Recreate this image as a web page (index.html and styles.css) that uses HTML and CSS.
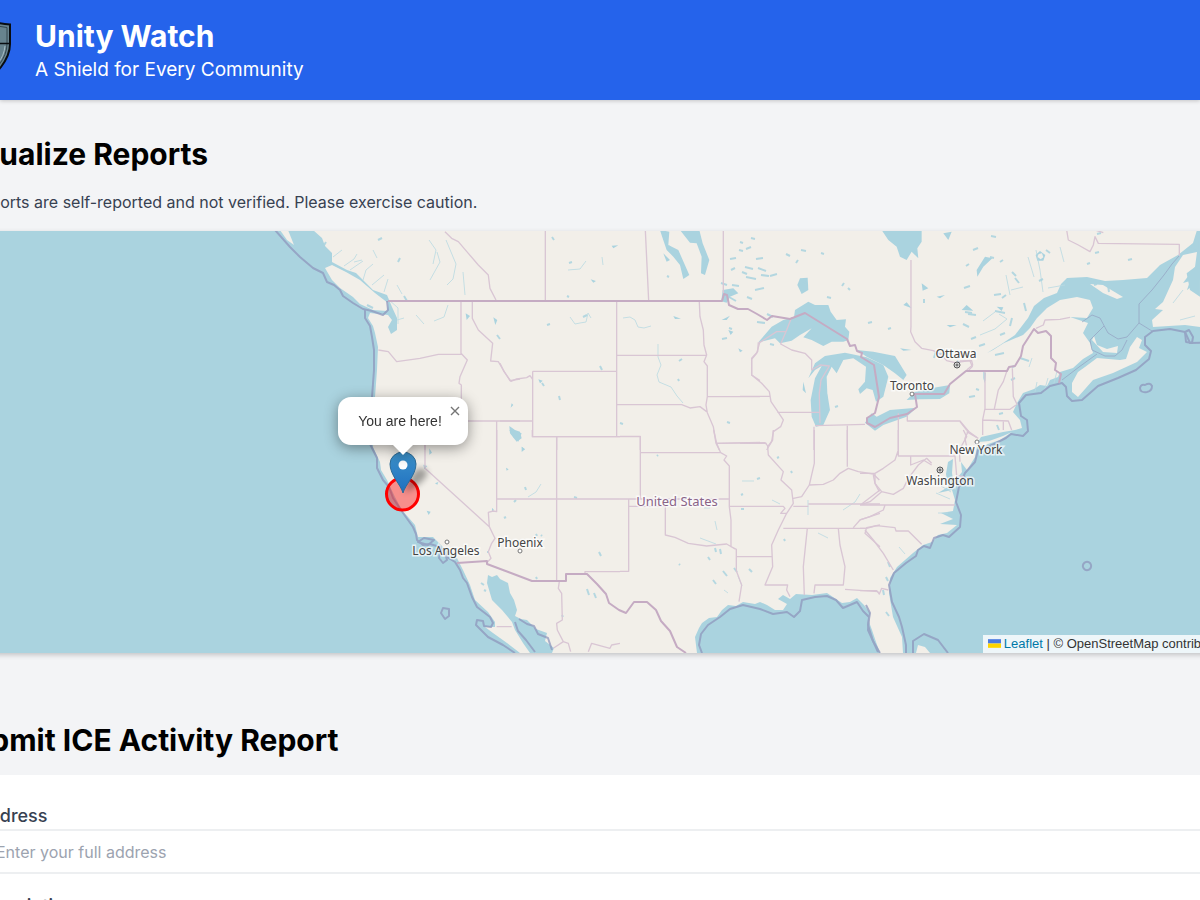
FILE: index.html
```html
<!DOCTYPE html>
<html lang="en">
<head>
<meta charset="utf-8">
<meta name="viewport" content="width=device-width, initial-scale=1">
<title>Unity Watch</title>
<link rel="stylesheet" href="styles.css">
</head>
<body>
<header class="site-header">
  <div class="brand">
    <svg class="logo" viewBox="0 0 59 68" aria-hidden="true">
      <path d="M29 2Q40 7 58 8.500V28Q58 39 49 51Q42 60 29 66Q16 60 9 51Q0 39 0 28V8.500Q18 7 29 2Z" fill="#67838e" stroke="#090d11" stroke-width="2"/>
      <path d="M29 6Q40 10 55 11.500V28Q55 38 47 49Q40 57 29 62Q18 57 11 49Q3 38 3 28V11.500Q18 10 29 6Z" fill="none" stroke="#34464e" stroke-width="1"/>
      <path d="M0 27.500H58M29 2V66" fill="none" stroke="#090d11" stroke-width="1.400"/>
      <path d="M53 30Q52 40 46 47" fill="none" stroke="#a9bec6" stroke-width="1"/>
    </svg>
    <div>
      <h1 class="brand-name">Unity Watch</h1>
      <p class="brand-tagline">A Shield for Every Community</p>
    </div>
  </div>
</header>

<main class="content">
  <section class="reports">
    <h2 class="section-title">Visualize Reports</h2>
    <p class="notice">All reports are self-reported and not verified. Please exercise caution.</p>
    <div class="map">
      <svg class="map-canvas" viewBox="-48 231 1283 422" preserveAspectRatio="xMinYMin slice" role="img" aria-label="Map of the United States">
        <defs>
          <linearGradient id="pin" x1="0" y1="0" x2="0" y2="1"><stop offset="0" stop-color="#3d93cb"/><stop offset="1" stop-color="#1f6fc0"/></linearGradient>
          <filter id="soft" x="-50%" y="-50%" width="200%" height="200%"><feGaussianBlur stdDeviation="3"/></filter>
        </defs>
        <rect class="land" x="-64" y="230" width="1400" height="424"/>
        <g class="water">
          <path d="M-64 230H313L322 238L325 246L332 253L332 262L347 270L356 273L363 280L373 290L387 295L392 307L397 318L397 330L391 334L388 327L392 320L388 315L370 313L368 318L373 326L375 333L378 347L377 370L375 397L373 447L380 462L381 470L387 480L395 497L402 510L415 525L418 537L433 537L443 547L457 558L463 570L470 585L475 600L488 612L495 622L495 627L485 627L493 633L507 643L520 653H-64Z"/>
          <path d="M488 575L492 577L497 575L500 579L508 583L510 593L514 600L517 610L515 616L521 619L527 620L536 629L547 633L545 641L554 648L552 653H530L523 643L515 630L512 622L502 610L492 600L487 583Z"/>
          <path d="M697 653L695 637L699 628L702 623L709 618L717 617L722 610L728 605L736 606L743 602L755 604L760 602L767 605L775 610L783 610L787 604L778 599L783 595L790 599L796 594L812 595L827 593L842 603L850 602L857 598L864 605L870 613L869 622L872 630L876 642L880 653Z"/>
          <path d="M903 653L902 637L893 617L889 593L890 578L897 567L913 553L923 545L932 542L938 535L947 533L957 525L940 524L953 519L941 513L953 511L955 500L952 490L938 493L948 487L946 474L948 462L953 459L952 473L955 490L958 477L962 472L961 462L967 470L975 457L977 447L990 441L978 442L981 437L1003 432L1015 430L1022 428L1020 420L1013 412L1017 403L1023 393L1034 389L1040 385L1047 386L1050 380L1058 377L1060 372L1073 368L1083 359L1093 353L1090 343L1083 333L1088 323L1070 317L1087 318L1093 308L1090 300L1077 297L1060 300L1047 308L1037 318L1030 328L1023 335L1004 343L993 350L987 353L1000 345L1015 335L1028 318L1034 306L1044 298L1057 293L1061 284L1067 278L1087 277L1105 281L1123 280L1147 278L1160 265L1178 255L1193 243L1197 230H1340V653Z"/>
          <path d="M907 653L914 638L928 640L937 653Z"/>
        </g>
        <g class="land">
          <path d="M325 268L332 265L346 272L360 280L375 293L388 303L387 311L373 310L360 304L353 297L340 288L332 280Z"/>
          <path d="M280 230L288 230L294 245L287 240Z"/>
          <path d="M1072 383L1078 372L1085 367L1097 358L1120 360L1126 359L1130 347L1137 337L1142 340L1139 348L1147 352L1137 362L1113 373L1093 380L1078 397L1072 392Z"/>
          <path d="M1092 340L1094 336L1097 345L1107 349L1118 346L1117 353L1103 352Z"/>
          <path d="M1090 284L1103 285L1123 297L1117 299L1103 293Z"/>
          <path d="M1183 255L1197 252L1195 267L1183 283L1190 281L1187 290L1200 280L1240 270V327L1200 327L1185 325L1153 327L1152 320L1163 310L1155 309L1163 302L1173 280L1175 267Z"/>
          <path d="M978 445L1003 436L1012 432L1000 440L982 446Z"/>
          <path d="M916 653L918 645L925 647L930 653Z"/>
        </g>
        <g class="water" transform="translate(740 230) scale(.3333)">
          <path d="M55 337L95 290L130 270L162 262L165 240L205 215L225 225L265 225L272 245L290 270L318 268L315 290L328 305L325 330L310 335L275 335L250 348L215 330L190 322L215 295L180 315L155 332L120 340L105 325Z"/>
          <path d="M205 445L225 400L255 378L315 368L380 382L430 405L445 440L430 500L408 515L398 480L380 475L360 492L355 478L375 455L378 410L340 385L310 390L290 430L275 410L260 440L262 490L270 540L250 585L228 590L215 560L212 510L225 445L245 408L225 420Z"/>
          <path d="M350 360L400 365L465 378L500 435L490 450L465 430L430 405L380 380Z"/>
          <path d="M500 510L525 485L590 472L630 465L628 490L600 507L540 508Z"/>
          <path d="M375 578L395 550L410 560L450 540L530 533L500 560L430 585L405 602Z"/>
          <path d="M425 0L445 30L470 50L480 80L500 90L515 65L535 85L532 55L545 35L545 0Z"/>
          <path d="M172 165L180 145L203 143L205 180L185 192Z"/>
          <path d="M500 217L515 235L490 225ZM480 355L515 360L490 362ZM545 160L565 175L548 182ZM610 10L635 5L625 30ZM190 455L198 490L188 480ZM665 240L680 225L700 242ZM620 285L650 285L630 292ZM590 200L615 195L600 205Z"/>
        </g>
        <g class="water" transform="translate(500 230) scale(.3333)">
          <path d="M540 0H598L608 40L628 90L615 135L603 130L605 80L590 40L570 38ZM480 0L508 5L505 45L535 60L568 135L550 147L540 105L520 80L500 60L488 25ZM490 70L510 90L500 95Z"/>
          <path d="M668 180L700 175L715 190L690 200L680 218L664 214ZM665 270L690 257L680 270ZM685 300L700 305L692 315ZM715 355L728 362L720 367ZM272 148L288 153L280 158ZM335 47L355 46L340 55ZM520 258L543 266L525 267ZM28 588L45 600L60 605L65 625L50 635L30 610ZM115 448L128 452L120 460ZM65 650L75 658L68 660Z"/>
        </g>
        <g class="water" transform="translate(260 230) scale(.3333)">
          <path d="M700 262L712 270L706 285ZM617 250L630 258L620 270ZM755 520L760 525L752 533Z"/>
        </g>
        <g class="water" transform="translate(960 230) scale(.3333)">
          <path d="M75 80L97 85L70 110L52 140L50 120ZM110 230L130 232L125 243ZM70 425L78 430L74 460L70 445ZM680 130L720 100V200L690 180ZM690 50L715 30L715 65Z"/>
          <path d="M240 63L256 75L250 92L232 92L227 75ZM236 72L232 80L242 88L250 82L246 70Z" fill-rule="evenodd"/>
        </g>
        <g class="water" transform="translate(360 430) scale(.3333)">
          <path d="M208 55L216 68L208 74ZM190 104L202 108L193 118ZM225 160L235 156L232 164ZM200 242L212 245L206 255ZM448 0L485 10L475 35L460 22ZM485 50L495 58L485 66ZM438 113L446 118L440 122ZM396 233L402 240L396 246Z"/>
        </g>

        <g class="streams">
          <path d="M570 317l5 7 5-1 6-1 2-9 3 5M623 318l7-1 5 3 3 7 6 1 7-2M658 344v13l3 8-4 10 2 7 12 5 6 9 6 7M568 270l12-1 6-8M602 257l1 8M429 240l7 10-3 14M446 240l10 24-3 15-6 6M463 272l2 23M437 252l3 10-10 18M416 315l8 9M434 321l10-4 4-12M528 497l8-5 5-8"/>
          <path d="M333 257l9-7M344 266l10-7 3-5M350 270l13-9M363 280l3-10 7-6M372 285l12-10M384 292l4-13M397 320l7-2M402 294l-5-9M354 262l8-2M373 250l4 8M388 299l10 9 0 16"/>
          <path d="M980 335l15-6 12-10-8-5M1036 250l4 20 3 22M1028 257l6 20M1006 275l4 20M1011 290l12-3M1060 247l4 15M983 321l12-9M985 373v8M1029 367l3-9M1044 392l4-14M1054 383l3-12M1035 392l2-10M1065 285l-17 3M1173 303l10-13M1180 320l15-4"/>
          <path d="M948 513h-10M950 499l-14-6M951 492l-10-6M899 547l6 7M704 508h6M715 521l2 9M742 481h12M724 590l4 3M738 576l4 10M700 538l16 6M808 500v15M843 510l12-8 5-8M780 504l-8-4M818 533l10 5"/>
        </g>
        <g class="specks">
          <path d="M740 242l3 1m8-5l4 1m-9 10l5-2m5 12l7-1m-18 9l8 2m5-1l8 3m-20 6l10 2m5-4l8 1m-14 14l9-2m-17 9l5 2m18-23l7-2m9-20l4 2m6 7l2-3m4 24l4-2m-5-32l5 1m15 2l3 1m24 34l2 2m-23 7l4 1m11-12l2-3m-87 39l8 1m2-9l6 3m2 17l5-2m-10 12l4 1m52 49l1 6m8 7l3-1m30-83l4-1m16 7l3-1m33-29l0 4m12 48l-2 7m6-4l5-1m12 8l3 2m8-49l8 1m-5 24l5-2m3 9l6-2m9-49l7-1m-6 17l10 2m7 5l-2 8m-15 29l9-2m8 14l3-1m-39 23l3 1m-10 7l6-1m36-16l4-2m5-20l9 3m-30 53l4-1m-6 12l2 5"/>
          <path d="M730 259l6-1m-5 12l4-2m-14 15l6 2m-4 10l6-1m3-9l7 1m-10 11l7 4m6-29l5 2m-8-24l4 1m-14 77l3 1m-10 10l5-1m-58-92l2 4m5 5l3-2m-12 23l2 1m-102 19l2 1m-17-60l2 3m15 23l3-1m-52-46l3 1m60 100l4-2m-90 20l3 4m100 27l2 4m-60 13l2 3m15 10l1 4m60 23l3 1m104-2l3 1m-51-62l3-2m-4 20l1 2m-132-56l3-1"/>
          <path d="M715 548l1 4m-8 5l2 3m10-11l1 5m2 17l4 5m-14 4l3 4m18-16l3 4m12-3l3 3m-73-8l1 1m77-86l3-1m17-20l2-1m12 14l1 2m-51 22l2-1m-2 15l3 0m40 30l1 2m-128-85l1-1m-84 42l3 1m-41 36l1 2m-1 41l1 2m4-44l1 1m-55 16l2 0m15-34l2-1m19-30l1 3m-12 12l2-2m-35 83l3 2m0 5l2 1m76 24l1 2m24-28l2 6m5-2l2 5m3-46l2 4M888 562l2 5m-4 10l2 4m-5 9l1 5m2 17l3 4"/>
          <path d="M973 250l5-2m13-12l5 1m4 25l3-2m9 12l4 4m-52 12l6-2m-4-20l3-2m-6 60l6 3m-4-15l7 1m28 22l5-2m-3-35l4-3m9-17l4 5m5 20l2 8m13-30l4-2m3-29l4 3m-60 4l4 1m100 27l3-1m11 1l1 7m-22-28l3-1m5-10l4-1m29 8l4-1m-35-25l4-1M367 305l6 3M378 240l4-2M398 262l2-4m4 38l3 5M323 247l3-5M328 262l-3 4"/>
        </g>

        <g class="maritime">
          <path d="M275 230L290 247L300 257L313 268L323 273L327 282L334 285L340 290L343 296L353 303L363 309L372 311L383 315L388 310L387 301"/>
          <path d="M365 310V318L370 326L372 337L374 350V370L372 397L368 440L377 458V468L383 480L389 487L393 498L403 513L413 527L416 534L417 540L423 545L430 544L440 547L447 557L455 562L460 570L463 578L467 583L472 597L477 607L490 617L493 623L491 627L484 626L483 621L477 620L476 625L488 637L503 645L515 653"/>
          <path d="M441 550L439 558L443 563L447 560L445 553ZM443 608L449 609L449 616L445 619L441 613ZM418 542L424 538L434 540L428 545ZM515 622L518 631L526 640L535 652M519 619L527 624L534 626L538 634L548 638L552 650"/>
          <path d="M702 653L699 645L701 634L708 625L720 617L730 609L743 605L760 609L773 614L787 612L794 617L800 611L802 600L815 597L827 596L836 600L843 608L857 602L863 611L869 617L868 630L878 652"/>
          <path d="M866 605L870 613L868 625L873 641L880 653M906 653V645L902 627L899 617L892 602L889 585L894 573L906 563L916 556L918 550L924 546L930 548L934 538L943 535L949 537L960 527L961 515L956 502L959 487L965 473L975 462L978 450L990 446L1006 438L1011 434L1023 436L1028 431L1027 420L1021 416L1019 403L1026 395L1041 393L1050 386L1062 383L1066 387L1067 396L1072 401L1082 400L1098 386L1118 378L1136 370L1149 359L1151 351L1145 345V337L1153 331L1170 329L1185 332L1190 343L1240 342"/>
          <path d="M1185 332L1189 330L1193 337L1192 343L1186 342ZM1140 388Q1141 384 1145 385Q1150 382 1152 386Q1152 391 1147 392Q1140 393 1140 388ZM1083 567a4 4 0 1 0 8-2a4 4 0 1 0-8 2M913 653L913 641L924 634L938 640L948 653"/>
        </g>
        <g class="maritime faint"><path d="M1179 256L1172 264L1164 275L1152 290L1139 304V323L1127 337L1118 339L1108 333L1100 318L1092 315L1082 322M1139 323L1152 331M1127 340L1122 350L1115 356H1105L1092 350L1090 340L1104 326M1062 380L1079 367L1097 354"/></g>

        <g class="state">
          <path transform="translate(260 230) scale(.3333)" d="M555 5L575 25L595 35L625 70L655 105L685 135L690 175L708 210M603 213V370L622 390L600 440L597 460L604 465L604 573M637 213V265L655 300L698 340L692 393L715 395L730 420L750 452L780 447M355 360L385 365L410 395L480 385L535 373H605M495 580V660M604 573H780M710 573V660"/>
          <path transform="translate(500 230) scale(.3333)" d="M136 0V211M436 0L446 211M670 0V190M350 215V620M598 215L600 260L610 300L612 345L620 375L612 395L622 408V500L618 525L622 548L640 590L648 640L658 660M350 376H618M98 424H350M98 424V620H421V660M350 524H545L570 534L600 530L620 545M622 500H780M650 640L780 637M0 400L12 425L33 454L50 447L80 443L90 437L98 448M170 620V660M0 573H98M780 335L770 370L755 388L755 435L780 452"/>
          <path transform="translate(740 230) scale(.3333)" d="M513 90V290L512 305L525 335L545 355L580 362L605 375L620 392L645 398L690 392L697 410L685 422M155 262L140 300L122 342L155 360L195 370L215 390L215 420L240 405L268 408L243 450L238 490L240 580M60 337L110 305L138 304M55 337L53 365L35 385L35 435L65 460L88 485L93 515L110 540L130 570L122 590L100 605L95 635L80 660M0 499H90M112 547H240M222 590V660M225 587L375 583M322 587V660M475 550V660M502 555V573H660L685 603L675 625L680 650M0 640H80"/>
          <path transform="translate(360 430) scale(.3333)" d="M195 45V115L388 290L400 315L405 325L395 340L385 365L393 385L382 397M410 0V245L400 243L385 247L388 290M410 207H780M590 20V450M517 0V20H780M675 433V425H780M598 455L595 475L605 490L607 570L590 580L592 600L610 635L625 640L632 665M610 635L580 655M685 665L695 640L750 655L755 645L780 640M410 590H455"/>
          <path transform="translate(620 430) scale(.3333)" d="M0 19H61V207M61 68H300M0 207H327M281 0L290 40L302 68L320 78L312 90L328 108V230L333 270L333 350L349 358V422L365 465L357 515M290 40L435 38L445 50M460 0L458 30L443 50L445 75L490 125L483 150L515 180L520 220L500 250L475 300L455 345L458 410L435 465H503L500 480L510 500M330 229H490L495 235L482 250H500M520 229H565M565 222H780M26 207V424H0M26 229H136V315L165 322L205 340L260 348L320 342L345 357M490 295H740M350 380H455M562 295L550 410L553 495M655 295L660 345L675 410L670 465H585L582 490M675 478L775 485M583 0V100L568 165L610 163L640 150L660 130L685 115L715 125L760 132L778 150M682 0V110M520 205L545 200L568 165M725 222L780 180M760 135L765 160L778 185M700 293L720 270L780 250M780 285L740 293L735 310L780 350"/>
          <path transform="translate(860 430) scale(.3333)" d="M115 0V78H285L290 137L312 140M115 60L105 90L70 115L45 130L0 130M45 130L45 160L65 185L30 215L0 225M65 185L100 193L130 175L145 145L175 105L200 85L215 100M152 80V105L190 90L215 105M0 225H285M75 225L70 240L30 260L0 270M0 295H20L50 287L105 293L108 303H145L185 343M15 300L40 330L70 370L100 420M0 482H50L58 492L65 475L85 480M300 95L298 60L320 20L310 0M320 5L355 25"/>
          <path transform="translate(960 230) scale(.3333)" d="M320 0L325 30L355 45L390 65L400 45L405 20L415 40L658 43V77M405 0L430 8M228 295L250 285L255 270L300 268L330 262M75 425V535L68 570V615M75 538L150 538L168 525M140 425L130 455L115 480L103 537M157 415L160 500L172 525M68 570L145 573L155 600M130 573V600M0 575L20 600L50 622M0 393L35 392L38 405L20 420"/>
        </g>
        <g class="country">
          <path d="M388 301H722L724 294L727 295L729 305L738 309L748 309L757 314L767 320L772 316L790 319L805 313L847 339L850 346L855 345L857 351L862 353L861 357L874 365L879 397L875 413L867 418L867 423L875 427L890 418L907 414L917 407L915 394L944 394L950 384L966 371L1007 371L1009 367L1015 366L1021 356L1023 346L1034 329L1038 333L1046 331L1051 336V358L1056 363L1055 370L1061 374L1059 383"/>
          <path d="M457 563L487 561V564L532 581H566V574H587L597 584L606 594L609 603L619 610L626 613L634 602L647 602L656 610L661 621L670 631L677 647L686 653"/>
        </g>

        <g class="places">
          <g class="dot"><circle cx="447" cy="542" r="2"/><circle cx="520" cy="551" r="2"/><circle cx="912" cy="394" r="2"/><circle cx="977" cy="442" r="2"/></g>
          <g class="dot capital"><circle cx="957" cy="365" r="3"/><circle cx="957" cy="365" r="1"/><circle cx="940" cy="470" r="3"/><circle cx="940" cy="470" r="1"/></g>
          <text x="446" y="555">Los Angeles</text>
          <text x="520" y="547">Phoenix</text>
          <text x="956" y="358">Ottawa</text>
          <text x="912" y="390">Toronto</text>
          <text x="976" y="454">New York</text>
          <text x="940" y="485">Washington</text>
          <text class="nation" x="677" y="506">United States</text>
        </g>

        <circle cx="402.500" cy="494" r="16" fill="#f00" fill-opacity=".4" stroke="#f00" stroke-width="3"/>
        <path d="M404 493L412 474Q420 464 427 471Q429 480 404 493Z" fill="#000" opacity=".35" filter="url(#soft)"/>
        <path d="M403 493C401 485 390 475 390 464A13 12 0 0 1 416 464C416 475 405 485 403 493Z" fill="url(#pin)" stroke="#2e6c97" stroke-width="1"/>
        <circle cx="403" cy="465" r="4.500" fill="#fff"/>
      </svg>
      <div class="popup">
        <span>You are here!</span>
        <button class="popup-close" type="button" aria-label="Close popup"><svg viewBox="0 0 10 10" aria-hidden="true"><path d="M1 1L9 9M9 1L1 9"/></svg></button>
      </div>
      <div class="attribution">
        <a href="#leaflet"><svg class="flag" viewBox="0 0 12 8" aria-hidden="true"><path fill="#4c7be1" d="M0 0h12v4H0z"/><path fill="#ffd500" d="M0 4h12v4H0z"/></svg>Leaflet</a> | © OpenStreetMap contributors
      </div>
    </div>
  </section>

  <section class="submit">
    <h2 class="section-title">Submit ICE Activity Report</h2>
    <form class="report-form">
      <div class="field">
        <label for="address">Address</label>
        <input id="address" type="text" placeholder="Enter your full address">
      </div>
      <div class="field">
        <label for="description">Description</label>
        <textarea id="description" rows="4"></textarea>
      </div>
    </form>
  </section>
</main>
</body>
</html>
```
FILE: styles.css
```css
* { box-sizing: border-box; }

html { overflow: hidden; }

body {
  margin: 0;
  background: #f3f4f6;
  color: #000;
  font-family: Inter, "Liberation Sans", sans-serif;
  overflow: hidden;
}

h1, h2, p { margin: 0; }

.site-header {
  padding: 16px 0;
  background: #2563eb;
  color: #fff;
  box-shadow: 0 1px 4px rgba(0, 0, 0, .2);
}

.brand {
  display: flex;
  align-items: center;
  gap: 24px;
  margin-left: -48px;
}

.logo { width: 59px; height: 68px; }

.brand-name {
  font-size: 30px;
  line-height: 40px;
  font-weight: 700;
}

.brand-tagline {
  font-size: 19px;
  line-height: 28px;
}

.content {
  width: calc(100% + 83px);
  margin-left: -48px;
  padding-top: 32px;
}

.section-title {
  font-size: 30px;
  line-height: 44px;
  font-weight: 700;
}

.notice {
  margin: 14px 0 17px;
  font-size: 16px;
  line-height: 24px;
  color: #374151;
}

.map {
  position: relative;
  height: 422px;
  overflow: hidden;
  box-shadow: 0 2px 5px rgba(0, 0, 0, .2);
}

.reports { margin-bottom: 65px; }

.map-canvas { display: block; width: 100%; height: 100%; }

.land { fill: #f2efe9; }
.water { fill: #aad3df; }

.streams, .specks, .maritime, .state, .country { fill: none; stroke-linejoin: round; }
.streams { stroke: #b9dae2; stroke-width: 1; opacity: .8; }
.specks { stroke: #aad3df; stroke-width: 2; opacity: .85; }
.maritime { stroke: #8f97bd; stroke-width: 2; opacity: .75; }
.faint { stroke-width: 1; opacity: .6; }
.state { stroke: #d9c6d4; stroke-width: 4; }
.country { stroke: #c5abc3; stroke-width: 2; }

.places text {
  font: 12px "Noto Sans", sans-serif;
  text-anchor: middle;
  fill: #444;
  stroke: #fff;
  stroke-opacity: .7;
  stroke-width: 3;
  paint-order: stroke;
}

.places .nation { font-size: 13px; fill: #8a6488; }

.dot { fill: #fff; stroke: #777; stroke-width: 1; }
.capital { fill: #ddd; stroke: #555; }

.popup {
  position: absolute;
  left: 386px;
  top: 166px;
  display: flex;
  align-items: center;
  justify-content: center;
  width: 130px;
  height: 48px;
  padding-right: 6px;
  border-radius: 13px;
  background: #fff;
  color: #333;
  font: 14px/20px "Liberation Sans", sans-serif;
  filter: drop-shadow(0 3px 7px rgba(0, 0, 0, .4));
}

.popup::after {
  content: "";
  position: absolute;
  left: 54px;
  top: 47px;
  border: 11px solid transparent;
  border-top-color: #fff;
  border-bottom: 0;
}

.popup-close {
  position: absolute;
  right: 7px;
  top: 8px;
  width: 12px;
  height: 12px;
  padding: 1px;
  border: 0;
  background: none;
}

.popup-close svg {
  display: block;
  stroke: #757575;
  stroke-width: 1.4;
}

.attribution {
  position: absolute;
  right: 0;
  bottom: 0;
  padding: 0 5px;
  background: rgba(255, 255, 255, .8);
  color: #333;
  font: 13px/18px "Liberation Sans", sans-serif;
  white-space: nowrap;
}

.attribution a { color: #0078a8; text-decoration: none; }

.flag { width: 13px; height: 9px; margin-right: 3px; }

.submit .section-title { margin-bottom: 13px; }

.report-form {
  display: grid;
  gap: 18px;
  padding: 27px 24px;
  background: #fff;
}

.field { display: grid; }

.field label {
  font-size: 18px;
  line-height: 27px;
  font-weight: 500;
  color: #374151;
}

.field input,
.field textarea {
  width: 100%;
  padding: 8px 18px;
  border: 2px solid #edeff1;
  background: #fff;
  font: 16px/26px Inter, sans-serif;
}

.field input { height: 45px; }

.field input::placeholder { color: #9ca3af; opacity: 1; }
```
